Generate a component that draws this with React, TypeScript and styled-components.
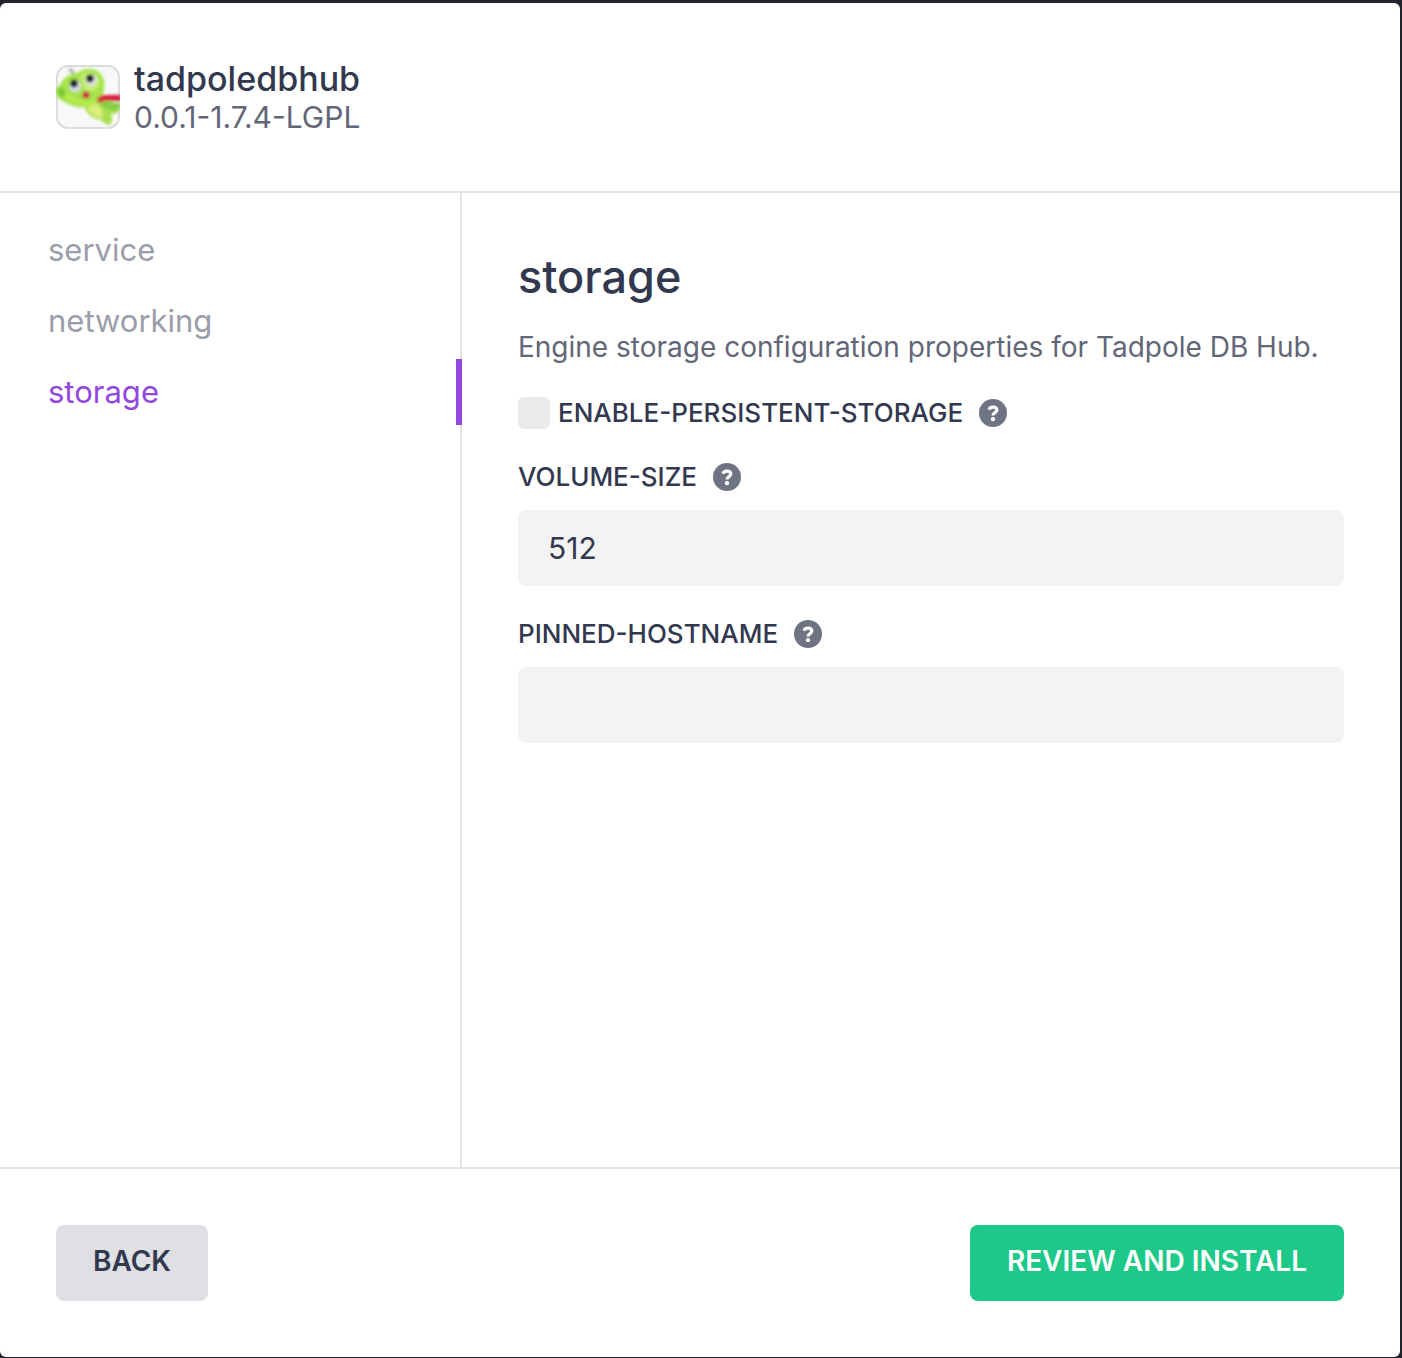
import React, { useState } from 'react';
import styled, { createGlobalStyle } from 'styled-components';

const color = {
  ink: '#32384e',
  muted: '#626677',
  faint: '#9a9eaa',
  purple: '#9248e0',
  green: '#1dc888',
  line: '#e4e4e6',
  field: '#f3f3f3',
};

const GlobalStyle = createGlobalStyle`
  *, *::before, *::after { box-sizing: border-box; }
  body {
    margin: 0;
    background: #22242d;
    color: ${color.ink};
    font-family: Inter, "Liberation Sans", sans-serif;
  }
  button, input { font: inherit; color: inherit; }
`;

const Backdrop = styled.div`
  display: flex;
  min-height: 100vh;
  padding: 3px 2px 1px 0;
`;

const Dialog = styled.main`
  flex: 1;
  display: flex;
  flex-direction: column;
  min-width: 0;
  border-radius: 6px;
  background: #fff;
`;

const Header = styled.header`
  display: flex;
  align-items: center;
  gap: 14px;
  padding: 56px;
  border-bottom: 2px solid ${color.line};
`;

const Logo = styled.svg`
  width: 64px;
  height: 64px;
  flex: none;
`;

const PackageName = styled.h1`
  margin: 0;
  font-size: 34px;
  line-height: 40px;
  font-weight: 500;
`;

const PackageVersion = styled.p`
  margin: 0;
  font-size: 30px;
  line-height: 36px;
  color: ${color.muted};
`;

const Body = styled.div`
  flex: 1;
  display: flex;
`;

const Sidebar = styled.nav`
  display: flex;
  flex-direction: column;
  gap: 5px;
  width: 33%;
  padding-top: 24px;
  border-right: 2px solid ${color.line};
`;

const NavLink = styled.a<{ $active: boolean }>`
  height: 66px;
  margin-right: -2px;
  padding-left: 48px;
  border-right: 6px solid ${p => (p.$active ? color.purple : 'transparent')};
  font-size: 31px;
  line-height: 66px;
  color: ${p => (p.$active ? color.purple : color.faint)};
  text-decoration: none;
`;

const Content = styled.form`
  flex: 1;
  display: flex;
  flex-direction: column;
  gap: 32px;
  min-width: 0;
  padding: 56px;
`;

const SectionTitle = styled.h2`
  margin: 0 0 24px;
  font-size: 45px;
  line-height: 56px;
  font-weight: 500;
`;

const Description = styled.p`
  margin: 0;
  font-size: 28px;
  line-height: 36px;
  color: ${color.muted};
`;

const Field = styled.div`
  display: flex;
  flex-direction: column;
  gap: 17px;
`;

const LabelRow = styled.div`
  display: flex;
  align-items: center;
  gap: 16px;
  height: 32px;
`;

const Label = styled.label`
  display: flex;
  align-items: center;
  gap: 8px;
  font-size: 26px;
  line-height: 32px;
  font-weight: 500;
  text-transform: uppercase;
`;

const Checkbox = styled.input`
  appearance: none;
  width: 32px;
  height: 32px;
  margin: 0;
  border-radius: 6px;
  background: #eaeaeb;
  &:checked { background: ${color.purple}; }
`;

const TextInput = styled.input`
  width: 100%;
  height: 76px;
  padding: 0 30px;
  border: 0;
  border-radius: 8px;
  background: ${color.field};
  font-size: 30px;
`;

const HelpButton = styled.button`
  display: flex;
  padding: 0;
  border: 0;
  background: none;
`;

const Footer = styled.footer`
  display: flex;
  justify-content: space-between;
  padding: 56px;
  border-top: 2px solid ${color.line};
`;

const Button = styled.button<{ $primary?: boolean }>`
  height: 76px;
  padding: 0 37px 4px;
  border: 0;
  border-radius: 8px;
  background: ${p => (p.$primary ? color.green : '#dfe0e4')};
  color: ${p => (p.$primary ? '#fff' : color.ink)};
  font-size: 28px;
  font-weight: 600;
  text-transform: uppercase;
`;

function TadpoleLogo() {
  return (
    <Logo viewBox="0 0 64 64" aria-hidden="true">
      <defs>
        <clipPath id="logo-frame"><rect width="64" height="64" rx="12" /></clipPath>
        <filter id="logo-soft"><feGaussianBlur stdDeviation="1.4" /></filter>
      </defs>
      <rect x="1" y="1" width="62" height="62" rx="11" fill="#f8f8f8" stroke="#dcdcdc" strokeWidth="2" />
      <g clipPath="url(#logo-frame)">
        <g filter="url(#logo-soft)">
          <path d="M13 4l5 4" stroke="#aaa" strokeWidth="3" />
          <path d="M28 40c2 9 9 14 17 15 4 4 8 6 10 4 2-3 1-7 0-10 4 0 8-1 9-6l-4-5-16-4z" fill="#a6e04f" />
          <path d="M31 41c2 7 8 12 15 12 2-6-1-12-6-14z" fill="#dcee7c" />
          <path d="M46 36l18 2v6c-5 3-12 2-18-3z" fill="#86cf47" />
          <path d="M-1 25c3-2 5-6 8-10C12 9 18 9 23 7c7-5 17-4 22 2 5 7 4 17 0 25-5 7-14 9-22 8C14 41 8 37 4 34c-4-2-5-6-5-9z" fill="#a5e34a" />
          <path d="M26 9c7-4 15-1 17 6 2 8-5 12-11 11-5-2-9-10-6-17z" fill="#c2ee6e" />
          <path d="M1 24l6-2 2 8-5 3z" fill="#79c536" />
          <path d="M11 31c6 5 18 10 28 6" stroke="#bced4f" strokeWidth="4" fill="none" />
          <ellipse cx="19" cy="21" rx="6" ry="6" fill="#dcdde8" />
          <ellipse cx="35" cy="15" rx="6" ry="6" fill="#e4e6ea" />
          <circle cx="18" cy="18.5" r="4" fill="#16172d" />
          <circle cx="34" cy="13.5" r="4" fill="#16171f" />
          <ellipse cx="30" cy="30" rx="3.8" ry="3.6" fill="#cf2946" />
          <path d="M43 37c2-4 4-5 7-4h15" stroke="#d81f3e" strokeWidth="6" fill="none" />
        </g>
      </g>
    </Logo>
  );
}

function Help({ topic }: { topic: string }) {
  return (
    <HelpButton type="button" aria-label={`Help for ${topic}`}>
      <svg width="28" height="28" viewBox="0 0 28 28" aria-hidden="true">
        <circle cx="14" cy="14" r="14" fill="#6f7482" />
        <path
          d="M10 10.8C10.5 9 12 8.2 14 8.2c2.3 0 3.8 1.1 3.8 2.9 0 2.5-3.8 2.6-3.8 5.4"
          fill="none" stroke="#fff" strokeWidth="3.2"
        />
        <circle cx="14" cy="20.2" r="2.1" fill="#fff" />
      </svg>
    </HelpButton>
  );
}

function TextField({ name, initial = '' }: { name: string; initial?: string }) {
  const [value, setValue] = useState(initial);
  return (
    <Field>
      <LabelRow>
        <Label htmlFor={name}>{name}</Label>
        <Help topic={name} />
      </LabelRow>
      <TextInput id={name} type="text" value={value} onChange={e => setValue(e.target.value)} />
    </Field>
  );
}

const sections = ['service', 'networking', 'storage'];

export default function App() {
  const [active, setActive] = useState('storage');
  return (
    <>
      <GlobalStyle />
      <Backdrop>
        <Dialog>
          <Header>
            <TadpoleLogo />
            <div>
              <PackageName>tadpoledbhub</PackageName>
              <PackageVersion>0.0.1-1.7.4-LGPL</PackageVersion>
            </div>
          </Header>
          <Body>
            <Sidebar>
              {sections.map(s => (
                <NavLink key={s} href={`#${s}`} $active={s === active} onClick={() => setActive(s)}>
                  {s}
                </NavLink>
              ))}
            </Sidebar>
            <Content id="config">
              <div>
                <SectionTitle>storage</SectionTitle>
                <Description>Engine storage configuration properties for Tadpole DB Hub.</Description>
              </div>
              <LabelRow>
                <Label>
                  <Checkbox type="checkbox" />
                  enable-persistent-storage
                </Label>
                <Help topic="enable-persistent-storage" />
              </LabelRow>
              <TextField name="volume-size" initial="512" />
              <TextField name="pinned-hostname" />
            </Content>
          </Body>
          <Footer>
            <Button type="button">Back</Button>
            <Button type="submit" form="config" $primary>Review and Install</Button>
          </Footer>
        </Dialog>
      </Backdrop>
    </>
  );
}
